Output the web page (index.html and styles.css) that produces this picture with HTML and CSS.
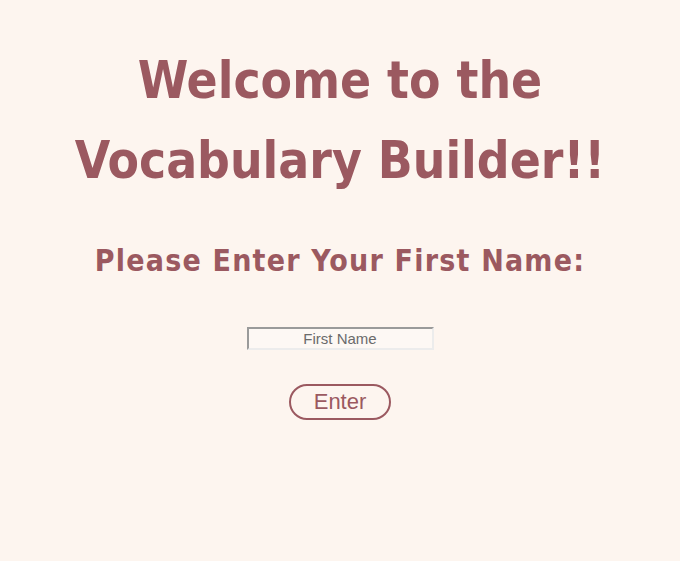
FILE: index.html
```html
<!DOCTYPE html>
<html>
<head>
<meta charset="utf-8">
<link rel="stylesheet" href="styles.css">
</head>
<body>
<main class="page">
  <h1 class="title">Welcome to the<br>Vocabulary Builder!!</h1>
  <h2 class="subtitle">Please Enter Your First Name:</h2>
  <input class="name-input" type="text" placeholder="First Name">
  <button class="enter-btn">Enter</button>
</main>
</body>
</html>
```
FILE: styles.css
```css
html, body {
  margin: 0;
  padding: 0;
  background: #fdf5ef;
}
.page {
  display: flex;
  flex-direction: column;
  align-items: center;
  padding-top: 41px;
}
.title {
  margin: 0;
  font-family: "Comic Sans MS", "DejaVu Sans Condensed", "DejaVu Sans", sans-serif;
  font-stretch: condensed;
  font-weight: bold;
  font-size: 51px;
  line-height: 80px;
  color: #9b5960;
  text-align: center;
}
.subtitle {
  margin: 40px 0 0;
  font-family: "Comic Sans MS", "DejaVu Sans Condensed", "DejaVu Sans", sans-serif;
  font-stretch: condensed;
  font-weight: bold;
  font-size: 30px;
  line-height: 40px;
  letter-spacing: 1.2px;
  color: #9b5960;
  text-align: center;
}
.name-input {
  margin-top: 46px;
  box-sizing: border-box;
  width: 187px;
  height: 23px;
  border-width: 2px;
  border-style: solid;
  border-color: #9a9a9a #ececec #ececec #9a9a9a;
  background: #fdf8f4;
  font-family: "Liberation Sans", Arial, sans-serif;
  font-size: 15px;
  text-align: center;
  padding: 0;
}
.name-input::placeholder {
  color: #6b6b6b;
}
.enter-btn {
  margin-top: 34px;
  box-sizing: border-box;
  width: 102px;
  height: 36px;
  border: 2px solid #9b5960;
  border-radius: 18px;
  background: transparent;
  color: #9b5960;
  font-family: "Liberation Sans", Arial, sans-serif;
  font-size: 22px;
  padding: 0;
}
```
